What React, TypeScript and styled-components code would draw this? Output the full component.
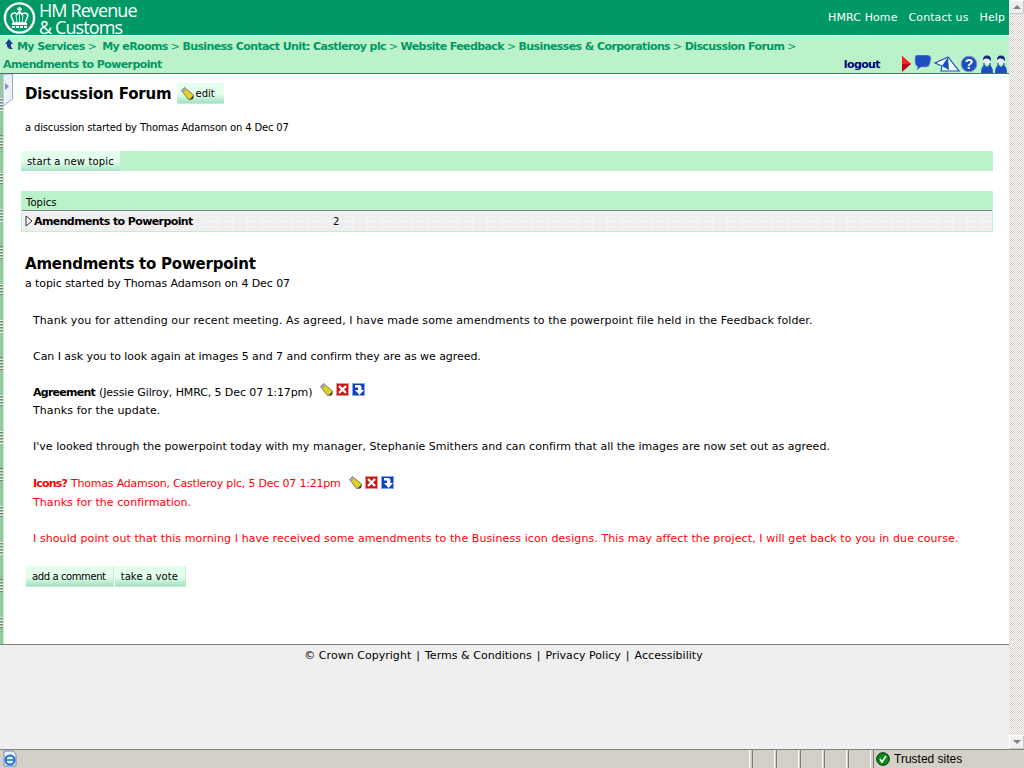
import React from "react";
import styled, { createGlobalStyle } from "styled-components";

const GlobalStyle = createGlobalStyle`
  html, body { margin: 0; padding: 0; height: 100%; overflow: hidden; }
  body { font-family: "DejaVu Sans", Verdana, sans-serif; font-size: 11px; color: #000; }
  #root { height: 100%; }
`;

const green = "#009966";
const mint = "#bbf2c9";

const Screen = styled.div`
  width: 1024px;
  height: 768px;
  display: flex;
  flex-direction: column;
`;

const Viewport = styled.div`
  flex: 1;
  display: flex;
  min-height: 0;
`;

const Page = styled.div`
  width: 1009px;
  display: flex;
  flex-direction: column;
  background: #efefef;
`;

const Header = styled.header`
  height: 35px;
  background: ${green};
  display: flex;
  justify-content: space-between;
  align-items: flex-start;
  border-bottom: 1px solid #fff;
`;

const Logo = styled.div`
  display: flex;
  gap: 3px;
  padding: 2px 0 0 3px;
  color: #fff;
`;

const LogoText = styled.div`
  font-family: "Open Sans", "Liberation Sans", sans-serif;
  font-size: 18px;
  line-height: 17px;
  letter-spacing: -0.9px;
`;

const TopLinks = styled.nav`
  display: flex;
  gap: 11px;
  padding: 11px 4px 0 0;
  color: #fff;
  line-height: 14px;
  letter-spacing: 0.1px;
`;

const Crumbs = styled.div`
  height: 37px;
  background: ${mint};
  border-bottom: 1px solid ${green};
  position: relative;
`;

const CrumbText = styled.div`
  padding: 2px 0 0 3px;
  color: ${green};
  font-weight: bold;
  line-height: 18px;
  letter-spacing: -0.6px;
`;

const CrumbSep = styled.span`
  font-weight: normal;
  margin: 0 3px 0 3px;
`;

const UpArrow = styled.svg`
  width: 10px;
  height: 11px;
  margin: 0 3px 0 1px;
`;

const CrumbTools = styled.div`
  position: absolute;
  right: 1px;
  bottom: 0;
  display: flex;
  align-items: flex-end;
`;

const Logout = styled.span`
  color: #000080;
  font-weight: bold;
  letter-spacing: -0.6px;
  margin-right: 20px;
  line-height: 17px;
`;

const Body = styled.div`
  height: 570px;
  display: flex;
  background: #fff;
  border-bottom: 1px solid #808080;
`;

const Rail = styled.div`
  width: 3px;
  background-color: #96c8a0;
  background-image: repeating-linear-gradient(#96c8a0 0 24px, transparent 24px 37px),
    repeating-linear-gradient(#e8e8e8 0 1px, #808080 1px 2px, #96c8a0 2px 3px);
  border-right: 1px solid ${mint};
  position: relative;
`;

const RailTab = styled.svg`
  position: absolute;
  left: 3px;
  top: 0;
  width: 10px;
  height: 33px;
`;

const Main = styled.main`
  flex: 1;
  padding: 9px 16px 0 17px;
`;

const TitleRow = styled.div`
  display: flex;
  align-items: center;
  gap: 5px;
  height: 21px;
  padding-left: 4px;
`;

const Title = styled.h1`
  margin: 1px 0 0;
  font-size: 15px;
  font-weight: bold;
  line-height: 21px;
  letter-spacing: -0.15px;
`;

const Button = styled.span<{ $track?: number }>`
  background: linear-gradient(#e4ffec 0, #e4ffec 55%, #a4e0c4 100%);
  color: #000;
  font-size: 10px;
  letter-spacing: ${(p) => p.$track ?? 0}px;
  display: inline-flex;
  align-items: center;
  gap: 2px;
  height: 20px;
  padding: 1px 6px 0;
  box-sizing: border-box;
`;

const EditButton = styled(Button)`
  height: 21px;
  padding: 0 9px 0 4px;
  border-bottom: 1px solid ${mint};
`;

const Byline = styled.p<{ $gap: number; $small?: boolean }>`
  margin: ${(p) => p.$gap}px 0 0 4px;
  line-height: 14px;
  font-size: ${(p) => (p.$small ? 10 : 11)}px;
  letter-spacing: ${(p) => (p.$small ? -0.16 : -0.09)}px;
`;

const ActionBar = styled.div`
  margin-top: 16px;
  height: 20px;
  background: ${mint};
  display: flex;
`;

const Topics = styled.section`
  margin-top: 20px;
  background: ${mint};
  padding: 0 1px 1px 1px;
`;

const TopicsHead = styled.div`
  height: 19px;
  font-size: 10px;
  line-height: 23px;
  padding-left: 4px;
  border-bottom: 1px solid #808080;
`;

const TopicRow = styled.div`
  height: 20px;
  display: flex;
  align-items: center;
  padding-left: 3px;
  font-weight: bold;
  background-color: #efefef;
  background-image: linear-gradient(90deg, #f5f5f5 1px, transparent 1px),
    linear-gradient(#f5f5f5 1px, transparent 1px);
  background-size: 15px 10px;
`;

const Expander = styled.svg`
  width: 9px;
  height: 12px;
  flex: none;
`;

const TopicName = styled.span`
  width: 299px;
  letter-spacing: -0.6px;
`;

const TopicCount = styled.span`
  font-weight: normal;
  font-size: 10px;
`;

const TopicTitle = styled(Title)`
  margin: 22px 0 0 4px;
  letter-spacing: -0.23px;
`;

const Thread = styled.div`
  margin: 21px 0 0 12px;
  line-height: 18px;
`;

const Para = styled.p<{ $red?: boolean; $track?: number }>`
  margin: 0 0 18px;
  color: ${(p) => (p.$red ? "#ff0000" : "#000")};
  letter-spacing: ${(p) => p.$track ?? 0}px;
`;

const CommentHead = styled.div<{ $red?: boolean }>`
  display: flex;
  align-items: center;
  gap: 4px;
  height: ${(p) => (p.$red ? 20 : 18)}px;
  color: ${(p) => (p.$red ? "#ff0000" : "#000")};
`;

const HeadTitle = styled.b<{ $track: number }>`
  letter-spacing: ${(p) => p.$track}px;
`;

const HeadMeta = styled.span<{ $track: number }>`
  letter-spacing: ${(p) => p.$track}px;
`;

const IconGroup = styled.span<{ $lift: number }>`
  display: inline-flex;
  gap: 3px;
  margin: ${(p) => -p.$lift}px 0 0 4px;
`;

const Buttons = styled.div`
  margin: 1px 0 0 5px;
  display: flex;
  gap: 1px;
`;

const LowerButton = styled(Button)`
  height: 21px;
  padding-right: 7px;
  border-bottom: 1px solid ${mint};
  border-right: 1px solid ${mint};
`;

const Footer = styled.footer`
  display: flex;
  justify-content: center;
  gap: 5px;
  padding: 4px 2px 0 0;
  line-height: 14px;
  letter-spacing: 0.03px;
`;

const Scrollbar = styled.div`
  width: 15px;
  display: flex;
  flex-direction: column;
  justify-content: space-between;
  background-image: repeating-conic-gradient(#d4d0c8 0 25%, #fff 0 50%);
  background-size: 2px 2px;
`;

const ScrollButton = styled.div<{ $down?: boolean }>`
  height: 14px;
  background: #efefef;
  border: 1px solid #fff;
  border-right-color: #c8c8c8;
  border-bottom-color: #c8c8c8;
  box-sizing: border-box;
  display: flex;
  align-items: center;
  justify-content: center;
  &::after {
    content: "";
    border-left: 4px solid transparent;
    border-right: 4px solid transparent;
    ${(p) =>
      p.$down
        ? "border-top: 4px solid #808080;"
        : "border-bottom: 4px solid #808080;"}
  }
`;

const StatusBar = styled.div`
  height: 18px;
  background: #d4d0c8;
  border-top: 1px solid #808080;
  display: flex;
  font-family: "Liberation Sans", Arial, sans-serif;
  font-size: 12px;
`;

const StatusMain = styled.div`
  flex: 1;
  padding-left: 2px;
  border-right: 1px solid #fff;
`;

const StatusCell = styled.div`
  width: 21px;
  margin-left: 2px;
  margin-right: -1px;
  border-left: 1px solid #808080;
  border-right: 1px solid #fff;
`;

const StatusZone = styled.div`
  width: 148px;
  margin-left: 3px;
  border-left: 1px solid #808080;
  display: flex;
  align-items: center;
  gap: 4px;
  padding-left: 2px;
`;

const Crown = () => (
  <svg width="33" height="32" viewBox="0 0 33 32">
    <circle cx="16.5" cy="16" r="14.6" fill="none" stroke="#fff" strokeWidth="2.4" />
    <path
      d="M11 21l-2.500-6c-1.500-3.500 3.500-5.500 5.500-2.500l2.500-3 2.500 3c2-3 7-1 5.500 2.500L22 21z"
      fill="none"
      stroke="#fff"
      strokeWidth="1.6"
    />
    <path d="M16.500 10v11M13 13l1 8M20 13l-1 8" stroke="#fff" strokeWidth="0.8" />
    <path d="M15.500 5h2v1.500H19V8h-1.500v1.500h-2V8H14V6.500h1.500z" fill="#fff" />
    <path d="M9 21h15v2H9zM9 24h3v2H9zM13 24h3v2h-3zM17 24h3v2h-3zM21 24h3v2h-3z" fill="#fff" />
  </svg>
);

const Pencil = () => (
  <svg width="13" height="13" viewBox="0 0 13 13">
    <path d="M0.500 3.500l3-3 9 7.500-1 4-4 .5z" fill="#e0d020" stroke="#606060" strokeWidth="0.8" />
    <path d="M0.500 3.500l3-3 2.200 1.900-3 3z" fill="#b8a0b0" />
    <path d="M8.500 12.500l3.500-.5.500-3.500z" fill="#333" />
  </svg>
);

const Cross = () => (
  <svg width="13" height="13" viewBox="0 0 13 13">
    <rect width="13" height="13" fill="#c81818" />
    <rect x="0.5" y="0.5" width="12" height="12" fill="none" stroke="#f09090" />
    <path d="M3 3l7 7m0-7l-7 7" stroke="#fff" strokeWidth="2.400" />
  </svg>
);

const DownBox = () => (
  <svg width="13" height="13" viewBox="0 0 13 13">
    <rect width="13" height="13" fill="#1040c0" />
    <rect x="0.5" y="0.5" width="12" height="12" fill="none" stroke="#80a8f0" />
    <path d="M3 2h4q2.500 0 2.500 2.500V7H12l-4.500 5L3 7h3V4.500H3z" fill="#fff" />
  </svg>
);

const Person = ({ x }: { x: number }) => (
  <g transform={`translate(${x} 0)`}>
    <path d="M1 18q0-7 4-8l2 2 2-2q4 1 4 8z" fill="#1c50c0" />
    <circle cx="7" cy="5.500" r="3.800" fill="#e8f0ff" />
    <path d="M3 6q-.5-5.500 4-5.500T11 6Q9 3 6 3.500T3 6z" fill="#102a80" />
    <path d="M4 8v3M10 8v3" stroke="#102a80" />
  </g>
);

const ToolIcons = () => (
  <svg width="108" height="18" viewBox="0 0 108 18">
    <path d="M2 1l9 8-9 8z" fill="#c00018" />
    <path d="M2 1l9 8H2z" fill="#ff2020" />
    <path
      d="M17 0h10q4 0 4 3.500l-1 5q-1 3.500-4 3.500h-5l-4 3 .5-3.500q-2.500-1-2.500-4V3q0-3 2-3z"
      fill="#1c50c0"
      stroke="#a0a8d0"
      strokeWidth="0.6"
    />
    <path d="M35 8l13-6 11 14H41l1-5z" fill="#f4f8ff" stroke="#1c50c0" strokeWidth="1.200" />
    <path d="M42 11l6-9 1 13z" fill="#1c50c0" />
    <circle cx="69" cy="9" r="7.800" fill="#1c50c0" stroke="#8090c0" />
    <text x="69" y="14" textAnchor="middle" fontFamily="Liberation Sans" fontWeight="bold" fontSize="14" fill="#fff">
      ?
    </text>
    <Person x={80} />
    <Person x={94} />
  </svg>
);

const Sep = () => <span>|</span>;

const App: React.FC = () => {
  return (
    <Screen>
      <GlobalStyle />
      <Viewport>
        <Page>
          <Header>
            <Logo>
              <Crown />
              <LogoText>
                HM Revenue
                <br />& Customs
              </LogoText>
            </Logo>
            <TopLinks>
              <span>HMRC Home</span>
              <span>Contact us</span>
              <span>Help</span>
            </TopLinks>
          </Header>
          <Crumbs>
            <CrumbText>
              <UpArrow viewBox="0 0 10 11">
                <path d="M5 0l4 5H7v2q0 2 2 3H6Q3 9 3 6V5H1z" fill="#1c3c9c" />
              </UpArrow>
              My Services
              <CrumbSep>&gt;&nbsp;</CrumbSep>
              My eRooms
              <CrumbSep>&gt;</CrumbSep>
              Business Contact Unit: Castleroy plc
              <CrumbSep>&gt;</CrumbSep>
              Website Feedback
              <CrumbSep>&gt;</CrumbSep>
              Businesses &amp; Corporations
              <CrumbSep>&gt;</CrumbSep>
              Discussion Forum
              <CrumbSep>&gt;</CrumbSep>
              <br />
              Amendments to Powerpoint
            </CrumbText>
            <CrumbTools>
              <Logout>logout</Logout>
              <ToolIcons />
            </CrumbTools>
          </Crumbs>
          <Body>
            <Rail>
              <RailTab viewBox="0 0 10 33">
                <path d="M0 0h9.500v25L0 32z" fill="#eef0fb" stroke="#a0a8d0" />
                <path d="M2 9l4 3.500L2 16z" fill="#8090c8" />
              </RailTab>
            </Rail>
            <Main>
              <TitleRow>
                <Title>Discussion Forum</Title>
                <EditButton>
                  <Pencil />
                  edit
                </EditButton>
              </TitleRow>
              <Byline $gap={17} $small>
                a discussion started by Thomas Adamson on 4 Dec 07
              </Byline>
              <ActionBar>
                <Button $track={0.15}>start a new topic</Button>
              </ActionBar>
              <Topics>
                <TopicsHead>Topics</TopicsHead>
                <TopicRow>
                  <Expander viewBox="0 0 9 12">
                    <path d="M1 1l6 5-6 5z" fill="#fff" stroke="#333" />
                  </Expander>
                  <TopicName>Amendments to Powerpoint</TopicName>
                  <TopicCount>2</TopicCount>
                </TopicRow>
              </Topics>
              <TopicTitle as="h2">Amendments to Powerpoint</TopicTitle>
              <Byline $gap={2}>a topic started by Thomas Adamson on 4 Dec 07</Byline>
              <Thread>
                <Para $track={0.09}>
                  Thank you for attending our recent meeting. As agreed, I have made some amendments
                  to the powerpoint file held in the Feedback folder.
                </Para>
                <Para $track={-0.05}>
                  Can I ask you to look again at images 5 and 7 and confirm they are as we agreed.
                </Para>
                <CommentHead>
                  <HeadTitle $track={-0.75}>Agreement</HeadTitle>
                  <HeadMeta $track={-0.1}>(Jessie Gilroy, HMRC, 5 Dec 07 1:17pm)</HeadMeta>
                  <IconGroup $lift={7}>
                    <Pencil />
                    <Cross />
                    <DownBox />
                  </IconGroup>
                </CommentHead>
                <Para $track={0.09}>Thanks for the update.</Para>
                <Para $track={0.02}>
                  I've looked through the powerpoint today with my manager, Stephanie Smithers and can
                  confirm that all the images are now set out as agreed.
                </Para>
                <CommentHead $red>
                  <HeadTitle $track={-0.83}>Icons?</HeadTitle>
                  <HeadMeta $track={-0.2}>Thomas Adamson, Castleroy plc, 5 Dec 07 1:21pm</HeadMeta>
                  <IconGroup $lift={4}>
                    <Pencil />
                    <Cross />
                    <DownBox />
                  </IconGroup>
                </CommentHead>
                <Para $red $track={0.07}>
                  Thanks for the confirmation.
                </Para>
                <Para $red $track={0.09}>
                  I should point out that this morning I have received some amendments to the Business
                  icon designs. This may affect the project, I will get back to you in due course.
                </Para>
              </Thread>
              <Buttons>
                <LowerButton $track={-0.4}>add a comment</LowerButton>
                <LowerButton $track={0.1}>take a vote</LowerButton>
              </Buttons>
            </Main>
          </Body>
          <Footer>
            <span>© Crown Copyright</span>
            <Sep />
            <span>Terms &amp; Conditions</span>
            <Sep />
            <span>Privacy Policy</span>
            <Sep />
            <span>Accessibility</span>
          </Footer>
        </Page>
        <Scrollbar>
          <ScrollButton />
          <ScrollButton $down />
        </Scrollbar>
      </Viewport>
      <StatusBar>
        <StatusMain>
          <svg width="16" height="17" viewBox="0 0 16 17">
            <path d="M2 1h9l3 3v12H2z" fill="#e8f0fc" stroke="#7088b0" />
            <circle cx="8" cy="10" r="4.500" fill="none" stroke="#1c70d0" strokeWidth="2" />
            <path d="M4 10h8" stroke="#1c70d0" strokeWidth="1.500" />
          </svg>
        </StatusMain>
        <StatusCell />
        <StatusCell />
        <StatusCell />
        <StatusCell />
        <StatusCell />
        <StatusZone>
          <svg width="14" height="14" viewBox="0 0 14 14">
            <circle cx="7" cy="7" r="6.300" fill="#0a8a1a" stroke="#102010" />
            <path d="M4 7l2 3 4-6" fill="none" stroke="#fff" strokeWidth="1.600" />
          </svg>
          <span>Trusted sites</span>
        </StatusZone>
      </StatusBar>
    </Screen>
  );
};

export default App;
